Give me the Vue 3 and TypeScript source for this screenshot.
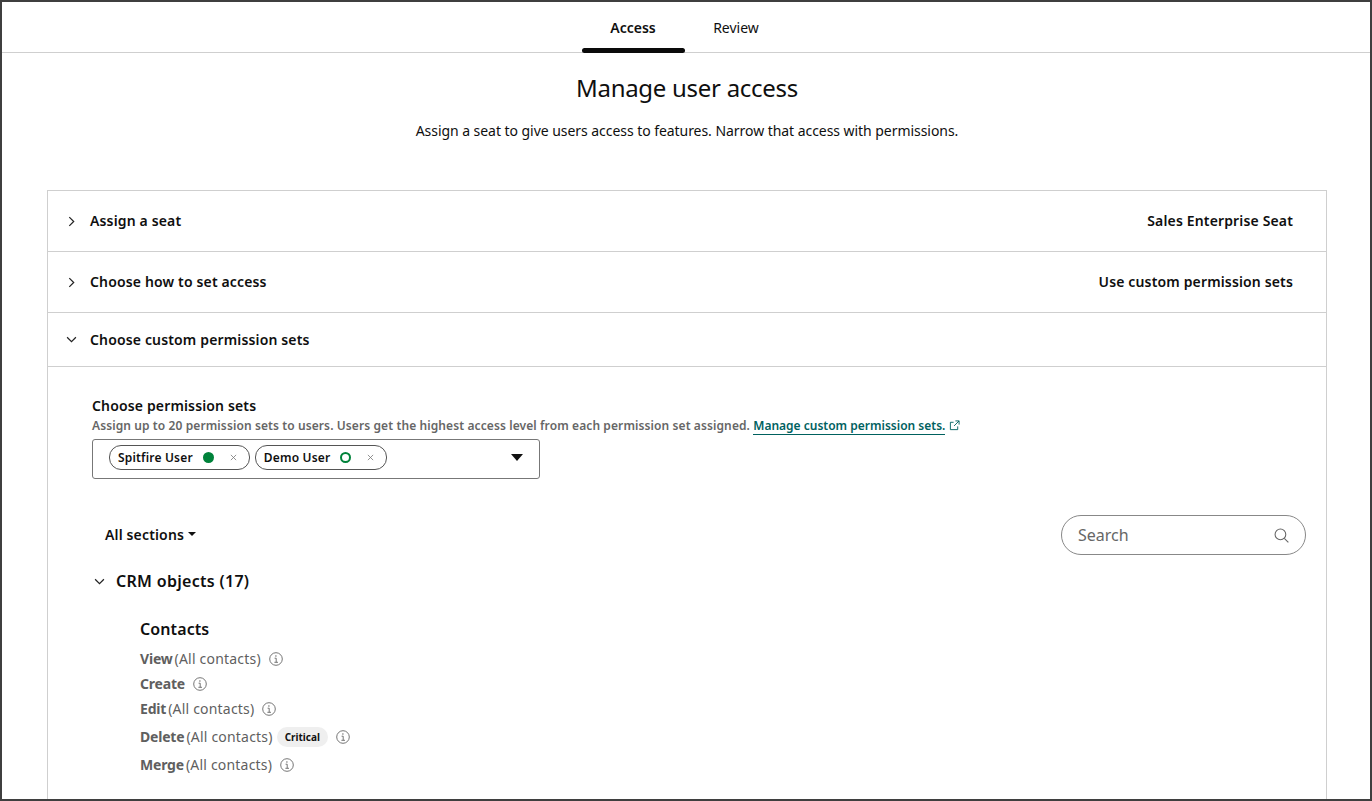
<template>
  <div class="frame">
    <nav class="tabs">
      <a v-for="tab in tabs" :key="tab" class="tab" :class="{ 'tab--active': tab === 'Access' }">{{ tab }}</a>
    </nav>

    <header class="intro">
      <h1>Manage user access</h1>
      <p>Assign a seat to give users access to features. Narrow that access with permissions.</p>
    </header>

    <section class="accordion">
      <div v-for="row in closedRows" :key="row.title" class="acc-row">
        <svg class="chev" viewBox="0 0 10 10"><path d="M3 1l4 4-4 4" /></svg>
        <span class="acc-title">{{ row.title }}</span>
        <span class="acc-value">{{ row.value }}</span>
      </div>
      <div class="acc-row acc-row--open">
        <svg class="chev" viewBox="0 0 10 10"><path d="M1 3l4 4 4-4" /></svg>
        <span class="acc-title">Choose custom permission sets</span>
      </div>

      <div class="acc-body">
        <h2 class="field-label">Choose permission sets</h2>
        <p class="field-help">
          Assign up to 20 permission sets to users. Users get the highest access level from each permission set assigned.
          <a class="link">Manage custom permission sets.</a>
          <svg class="ext" viewBox="0 0 12 12">
            <path d="M9.5 7v3.5h-8v-8H5M7 1h4v4M11 1L5.5 6.5" />
          </svg>
        </p>

        <div class="select">
          <span v-for="chip in chips" :key="chip.label" class="chip">
            <span class="chip-label">{{ chip.label }}</span>
            <span class="dot" :class="{ 'dot--hollow': chip.hollow }"></span>
            <svg class="chip-x" viewBox="0 0 8 8"><path d="M1 1l6 6M7 1L1 7" /></svg>
          </span>
          <span class="select-caret"></span>
        </div>

        <div class="toolbar">
          <span class="sections">All sections<span class="mini-caret"></span></span>
          <div class="search">
            <span>Search</span>
            <svg viewBox="0 0 14 14"><circle cx="6" cy="6" r="5" /><path d="M9.6 9.6L13.4 13.4" /></svg>
          </div>
        </div>

        <div class="group-head">
          <svg class="chev chev--small" viewBox="0 0 10 10"><path d="M1 3l4 4 4-4" /></svg>
          <h3>CRM objects (17)</h3>
        </div>

        <div class="perm-group">
          <h4>Contacts</h4>
          <div v-for="perm in perms" :key="perm.name" class="perm" :class="{ 'perm--tall': perm.critical }">
            <b>{{ perm.name }}</b>
            <span v-if="perm.scope" class="scope">(All contacts)</span>
            <span v-if="perm.critical" class="badge">Critical</span>
            <svg class="info" viewBox="0 0 14 14">
              <circle cx="7" cy="7" r="6.3" />
              <path d="M5.6 6.2H7.2V10.3M5.4 10.3H9" />
              <circle class="info-dot" cx="6.9" cy="4" r=".7" />
            </svg>
          </div>
        </div>
      </div>
    </section>
  </div>
</template>

<script setup lang="ts">
const tabs = ['Access', 'Review']

const closedRows = [
  { title: 'Assign a seat', value: 'Sales Enterprise Seat' },
  { title: 'Choose how to set access', value: 'Use custom permission sets' },
]

const chips = [
  { label: 'Spitfire User', hollow: false },
  { label: 'Demo User', hollow: true },
]

const perms = [
  { name: 'View', scope: true, critical: false },
  { name: 'Create', scope: false, critical: false },
  { name: 'Edit', scope: true, critical: false },
  { name: 'Delete', scope: true, critical: true },
  { name: 'Merge', scope: true, critical: false },
]
</script>

<style>
html,
body {
  margin: 0;
  background: #fff;
}
</style>

<style scoped>
.frame {
  display: flex;
  flex-direction: column;
  box-sizing: border-box;
  width: 1372px;
  height: 801px;
  border: 2px solid #3f3f3f;
  overflow: hidden;
  background: #fff;
  color: #0f0f0f;
  font-family: "Noto Sans", "Open Sans", sans-serif;
}

.tabs {
  display: flex;
  flex: none;
  justify-content: center;
  height: 50px;
  padding-right: 3px;
  border-bottom: 1px solid #cfcfcf;
  box-sizing: content-box;
}

.tab {
  position: relative;
  width: 103px;
  text-align: center;
  font-size: 14px;
  line-height: 52px;
}

.tab--active {
  font-weight: 600;
}

.tab--active::after {
  content: "";
  position: absolute;
  left: 0;
  right: 0;
  bottom: -1px;
  height: 5px;
  border-radius: 3px;
  background: #0a0a0a;
}

.intro {
  flex: none;
  padding-left: 2px;
  text-align: center;
}

.intro h1 {
  margin: 19px 0 0;
  font-size: 24px;
  font-weight: 400;
  line-height: 32px;
  letter-spacing: -0.28px;
}

.intro p {
  margin: 17px 0 0;
  font-size: 14px;
  line-height: 20px;
  letter-spacing: -0.05px;
}

.accordion {
  flex: 1;
  min-height: 0;
  margin: 49px 43px 0 45px;
  border: 1px solid #cfcfcf;
  border-bottom: 0;
}

.acc-row {
  display: flex;
  align-items: center;
  height: 60px;
  padding: 0 33px 0 18px;
  border-bottom: 1px solid #cfcfcf;
}

.acc-row--open {
  height: 53px;
}

.chev {
  width: 11px;
  height: 11px;
  margin-right: 13px;
  fill: none;
  stroke: #222;
  stroke-width: 1.1;
}

.chev--small {
  margin-right: 11px;
}

.acc-title,
.acc-value {
  margin-bottom: 2px;
  font-size: 14px;
  font-weight: 600;
  letter-spacing: .15px;
}

.acc-row--open .acc-title {
  margin-bottom: 0;
}

.acc-value {
  margin-left: auto;
}

.acc-body {
  padding: 30px 20px 0 44px;
}

.field-label {
  margin: 0;
  font-size: 14px;
  font-weight: 600;
  line-height: 18px;
  letter-spacing: .15px;
}

.field-help {
  margin: 3px 0 0;
  color: #666;
  font-size: 12px;
  font-weight: 600;
  line-height: 16px;
  letter-spacing: .1px;
}

.link {
  color: #00615f;
  border-bottom: 1px solid #00615f;
  letter-spacing: 0;
}

.ext {
  width: 11px;
  height: 11px;
  margin-left: 4px;
  fill: none;
  stroke: #00615f;
  stroke-width: 1;
  vertical-align: -1px;
}

.select {
  display: flex;
  align-items: center;
  gap: 5px;
  width: 448px;
  height: 40px;
  margin-top: 5px;
  padding: 0 15px 4px 16px;
  box-sizing: border-box;
  border: 1px solid #777;
  border-radius: 3px;
}

.chip {
  display: inline-flex;
  align-items: center;
  height: 23px;
  padding: 0 12px 0 8px;
  border: 1px solid #555;
  border-radius: 12px;
  font-size: 12px;
  font-weight: 600;
  letter-spacing: .18px;
}

.dot {
  width: 11px;
  height: 11px;
  margin: 0 0 0 10px;
  box-sizing: border-box;
  border-radius: 50%;
  background: #00823a;
}

.dot--hollow {
  background: #fff;
  border: 2px solid #00823a;
}

.chip-x {
  width: 7px;
  height: 7px;
  margin-left: 16px;
  fill: none;
  stroke: #777;
  stroke-width: .9;
}

.select-caret {
  margin-left: auto;
  margin-right: 1px;
  border-left: 6.5px solid transparent;
  border-right: 6.5px solid transparent;
  border-top: 7px solid #111;
}

.toolbar {
  display: flex;
  align-items: center;
  justify-content: space-between;
  height: 40px;
  margin-top: 36px;
}

.sections {
  display: inline-flex;
  align-items: center;
  margin-left: 13px;
  margin-bottom: 2px;
  font-size: 14px;
  font-weight: 600;
  letter-spacing: .15px;
}

.mini-caret {
  margin-left: 4px;
  border-left: 4px solid transparent;
  border-right: 4px solid transparent;
  border-top: 4px solid #111;
}

.search {
  display: flex;
  align-items: center;
  justify-content: space-between;
  width: 245px;
  height: 40px;
  padding: 0 16px;
  box-sizing: border-box;
  border: 1px solid #888;
  border-radius: 20px;
  color: #666;
  font-size: 16px;
}

.search svg {
  width: 15px;
  height: 15px;
  fill: none;
  stroke: #666;
  stroke-width: 1;
}

.group-head {
  display: flex;
  align-items: center;
  height: 26px;
  margin-top: 13px;
  margin-left: -41px;
  padding-left: 43px;
}

.group-head h3 {
  margin: 0;
  font-size: 16px;
  font-weight: 600;
  letter-spacing: .3px;
}

.perm-group {
  margin-top: 23px;
  margin-left: 48px;
}

.perm-group h4 {
  margin: 0 0 5px;
  font-size: 16px;
  font-weight: 600;
  line-height: 24px;
  letter-spacing: .1px;
}

.perm {
  display: flex;
  align-items: center;
  height: 25px;
  color: #5f5f5f;
  font-size: 14px;
}

.perm--tall {
  height: 31px;
}

.perm b {
  font-weight: 700;
  letter-spacing: -.2px;
}

.scope {
  margin-left: 2px;
  letter-spacing: .2px;
}

.badge {
  margin-left: 4px;
  padding: 0 8px;
  border-radius: 10px;
  background: #efefef;
  color: #111;
  font-size: 10px;
  font-weight: 700;
  line-height: 20px;
}

.info {
  width: 14px;
  height: 14px;
  margin-left: 8px;
  fill: none;
  stroke: #666;
  stroke-width: .9;
}

.info-dot {
  fill: #666;
  stroke: none;
}
</style>
